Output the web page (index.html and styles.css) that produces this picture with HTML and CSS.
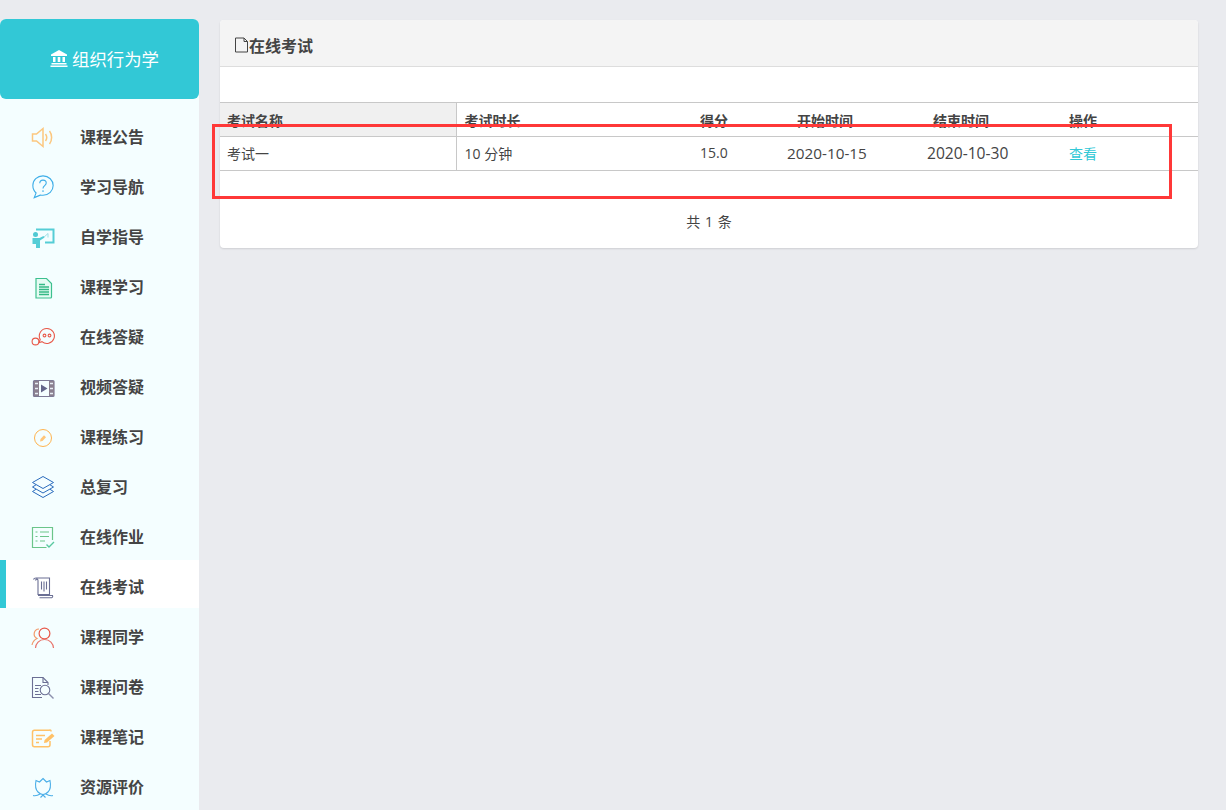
FILE: index.html
```html
<!DOCTYPE html>
<html lang="zh-CN">
<head>
<meta charset="utf-8">
<title>在线考试</title>
<link rel="stylesheet" href="styles.css">
</head>
<body>
<div class="app">
  <aside class="sidebar">
    <div class="course">
      <svg class="bank" viewBox="0 0 18 18"><path d="M9 1 1 5.500V7h16V5.500zM3 8h2.500v5H3zM7.700 8h2.600v5H7.700zM12.500 8H15v5h-2.500zM1.500 14h15v1.500h-15zM.5 16.500h17V18H.5z" fill="#fff"/></svg>
      <span>组织行为学</span>
    </div>
    <nav class="nav">
      <a class="item"><svg class="ico" viewBox="0 0 24 24" fill="none" stroke="#fcc77f" stroke-width="1.500"><path d="M1.500 9H5.500L12 3.500V21.500L5.500 16H1.500Z"/><path d="M14.500 9a6 6 0 0 1 0 7"/><path d="M18.500 6c2.800 3.500 2.800 9.500 0 13"/></svg><span>课程公告</span></a>
      <a class="item"><svg class="ico" viewBox="0 0 24 26" fill="none" stroke="#3eaee8" stroke-width="1.200"><path d="M12 1C5.700 1 1 5.500 1 11.500c0 3.500 1.300 6 3.500 8L2.500 24.500l6.500-2.700c1 .2 2 .2 3 .2 6.300 0 11-4.700 11-10.500S18.300 1 12 1z"/><path d="M8.500 9c0-2.200 1.600-3.500 3.500-3.500s3.500 1.300 3.500 3.200c0 3-3.500 2.800-3.500 6"/><path d="M12 16.500v1.800"/></svg><span>学习导航</span></a>
      <a class="item"><svg class="ico" viewBox="0 0 24 24"><path d="M5 3.500h18.500v15H14v-2h7.500V5.500H5z" fill="#55cdd6"/><path d="M12 13l5-4.500M17 8.500v4" stroke="#9fdfe4" fill="none"/><circle cx="4.500" cy="9.500" r="2.500" fill="#4fc9d3"/><path d="M1.500 13h7l4-2 1 1.500-4.500 3V23H5v-4H1.500z" fill="#55cdd6"/></svg><span>自学指导</span></a>
      <a class="item"><svg class="ico" viewBox="0 0 24 24"><path d="M5 3.500h10.500l5 5v13.500a1 1 0 0 1-1 1H5z" fill="#e5fbf3" stroke="#3cc08f" stroke-width="1.200"/><path d="M8 9.500h6M8 12h10M8 14.500h10M8 17h10M8 19.500h10" stroke="#33b985" stroke-width="1.500"/></svg><span>课程学习</span></a>
      <a class="item"><svg class="ico" viewBox="0 0 24 24" fill="none" stroke="#e8594a" stroke-width="1.100"><path d="M16 3.500a7.500 7.500 0 1 1-5 13.200l-3 1 1.200-3.200A7.500 7.500 0 0 1 16 3.500z"/><circle cx="4.500" cy="16.500" r="3.400"/><circle cx="13.500" cy="10.500" r="1.400"/><circle cx="18.500" cy="10.500" r="1.400"/></svg><span>在线答疑</span></a>
      <a class="item"><svg class="ico" viewBox="0 0 24 24"><rect x="2.500" y="5.500" width="20.500" height="16" rx="1" fill="none" stroke="#7d7a96" stroke-width="1.200"/><path d="M3 6h5v15H3zM18 6h5v15h-5z" fill="#8a7f8f"/><path d="M4 8.500h3M4 13.500h3M4 18.500h3M19 8.500h3M19 13.500h3M19 18.500h3" stroke="#e8eef5" stroke-width="1.300"/><path d="M10 9.500l6.500 4-6.500 4z" fill="#63668a"/></svg><span>视频答疑</span></a>
      <a class="item"><svg class="ico" viewBox="0 0 24 24"><circle cx="12" cy="13" r="8.500" fill="none" stroke="#ffb44f" stroke-width="1"/><path d="M9 16.500l.5-2.500 3.500-3.800 2 2-3.500 3.800z" fill="#ffc67a"/></svg><span>课程练习</span></a>
      <a class="item"><svg class="ico" viewBox="0 0 24 24" fill="none" stroke="#2a6bbd" stroke-width="1" stroke-linejoin="round"><path d="M12 1.500 22.500 7.500 12 13.500 1.500 7.500z"/><path d="M5 9.800 1.500 12 12 18l10.500-6L19 9.800"/><path d="M5 14.300 1.500 16.500 12 22.500l10.500-6L19 14.300"/></svg><span>总复习</span></a>
      <a class="item"><svg class="ico" viewBox="0 0 24 24" fill="none" stroke="#6bc58a" stroke-width="1.200"><path d="M21.500 15V2.500H1.500v20h14"/><path d="M4.500 7h2M9 7h9M4.500 11.500h2M9 11.500h9M4.500 16h2M9 16h5"/><path d="M15.500 19.500l2.500 2.500 5-5" stroke="#58c9a0" stroke-width="1.400"/></svg><span>在线作业</span></a>
      <a class="item active"><svg class="ico" viewBox="0 0 24 24" fill="none" stroke="#6b6f94" stroke-width="1.100"><path d="M2.500 4.500C3 3 4 3 5 3h13.500v16.500H7V5.500C7 3.800 5 3.500 4.500 5.500"/><path d="M7 20.500h14.500c.5 1 0 2-.8 2.200H8.500"/><path d="M10.500 6.500v8M13 6.500v10M15.500 6.500v8"/></svg><span>在线考试</span></a>
      <a class="item"><svg class="ico" viewBox="0 0 24 24" fill="none" stroke-width="1.200"><path d="M8 4a5 5 0 0 0-2 9.500C3.200 14.800 1.500 17.500 1 20" stroke="#f29b6c"/><circle cx="13.500" cy="8.500" r="5.400" stroke="#e8594a"/><path d="M4.500 23c.3-4.500 3.500-8.500 9-8.500s8.700 4 9 8.500" stroke="#e8736a"/></svg><span>课程同学</span></a>
      <a class="item"><svg class="ico" viewBox="0 0 24 24" fill="none" stroke="#6b6f94" stroke-width="1.100"><path d="M11 22.500H1.500V2.500h10.500l5 5v2.500"/><path d="M12 2.500v5h5"/><path d="M4 10.500h6M4 13.500h3.500M4 16.500h3.500M4 19.500h6"/><circle cx="14" cy="15" r="4.800"/><path d="M17.500 18.500l5 5" stroke-width="1.400" stroke="#8c90ad"/></svg><span>课程问卷</span></a>
      <a class="item"><svg class="ico" viewBox="0 0 24 24" fill="none" stroke="#ffc167" stroke-width="1.500"><path d="M20 6.500V6a1 1 0 0 0-1.500-.8H3.500A2 2 0 0 0 1.500 7.200v12.600a2 2 0 0 0 2 2h13.500a2 2 0 0 0 2-2V16"/><path d="M5 10.500h9M5 14h6M5 17.500h3"/><path d="M13 18l.6-3L21 8.500l2.500 2.500-7.500 6.500z" fill="#ffc167" stroke="none"/></svg><span>课程笔记</span></a>
      <a class="item"><svg class="ico" viewBox="0 0 24 24" fill="none" stroke="#4aaee8" stroke-width="1.100"><path d="M12 3.500 15.500 7l3.500-1.500c1 5 .5 9-2 11.500-1.500 1.500-3.200 2.500-5 2.500S8.500 18.500 7 17C4.500 14.500 4 10.500 5 5.500L8.500 7z"/><path d="M2 20.500c2.500.5 5.500-.5 7-1.500M22 20.500c-2.500.5-5.500-.5-7-1.500M9.500 22.500 12 20l2.500 2.500"/></svg><span>资源评价</span></a>
    </nav>
  </aside>
  <main class="main">
    <section class="card">
      <header class="card-head">
        <svg class="doc" viewBox="0 0 15 16" fill="none" stroke="#444" stroke-width="1"><path d="M1.500 1h8.500l3.500 3.500v10.500h-12z"/><path d="M10 1v3.500h3.500"/></svg><span>在线考试</span>
      </header>
      <div class="toolbar"></div>
      <table class="exam">
        <colgroup>
          <col class="c1"><col class="c2"><col class="c3"><col class="c4"><col class="c5"><col class="c6">
        </colgroup>
        <thead>
          <tr>
            <th class="shade divided">考试名称</th>
            <th class="second">考试时长</th>
            <th>得分</th>
            <th class="start-head">开始时间</th>
            <th class="end-head">结束时间</th>
            <th>操作</th>
          </tr>
        </thead>
        <tbody>
          <tr>
            <td class="divided"><span class="cell">考试一</span></td>
            <td class="second"><span class="cell">10 分钟</span></td>
            <td><span class="cell">15.0</span></td>
            <td class="date"><span class="cell">2020-10-15</span></td>
            <td class="date wide"><span class="cell">2020-10-30</span></td>
            <td><a class="view cell">查看</a></td>
          </tr>
        </tbody>
      </table>
      <div class="pager">共 1 条</div>
    </section>
  </main>
</div>
<div class="annotation"></div>
</body>
</html>
```
FILE: styles.css
```css
* { box-sizing: border-box; }
html, body { margin: 0; height: 100%; }
body {
  background: #eaebef;
  font-family: "Open Sans", "Noto Sans CJK SC", sans-serif;
  color: #444;
  overflow: hidden;
}
.app { display: flex; height: 810px; overflow: hidden; }
.sidebar {
  width: 199px;
  flex: none;
  margin-top: 19px;
  background: #f4feff;
  border-radius: 6px 6px 0 0;
}
.course {
  height: 80px;
  padding: 0 0 2px 50px;
  background: #32c8d6;
  border-radius: 6px;
  color: #fff;
  display: flex;
  align-items: center;
  gap: 4px;
  font-size: 17.4px;
}
.bank { width: 18px; height: 18px; }
.nav {
  display: flex;
  flex-direction: column;
  gap: 2px;
  padding-top: 11px;
}
.item {
  display: flex;
  align-items: center;
  flex: none;
  height: 48px;
  padding: 6px 0 0 31px;
  font-family: "Noto Sans CJK SC", sans-serif;
  font-size: 16px;
  font-weight: 700;
  color: #444;
}
.item span { margin: 0 0 2px 25px; }
.item.active {
  background: #fff;
  box-shadow: inset 6px 0 0 #32c8d6;
}
.ico { width: 24px; height: 24px; flex: none; }
.main { flex: 1; padding: 20px 28px 0 21px; }
.card {
  background: #fff;
  border-radius: 4px;
  box-shadow: 0 1px 2px rgba(0, 0, 0, .12);
  height: 228px;
  overflow: hidden;
}
.card-head {
  height: 47px;
  padding: 4px 0 0 14px;
  background: #f4f4f4;
  border-bottom: 1px solid #ddd;
  display: flex;
  align-items: center;
  font-family: "Noto Sans CJK SC", sans-serif;
  font-size: 16px;
  font-weight: 700;
}
.doc { width: 15px; height: 16px; }
.toolbar { height: 35px; }
.exam {
  width: 100%;
  table-layout: fixed;
  border-collapse: collapse;
  font-size: 14px;
}
.c1 { width: 236px; }
.c2 { width: 237px; }
.c3 { width: 87px; }
.c4 { width: 140px; }
.c5 { width: 142px; }
.exam th, .exam td {
  height: 34px;
  padding: 0 7px;
  text-align: left;
  border-top: 1px solid #c8c8c8;
  border-bottom: 1px solid #c8c8c8;
}
.exam th {
  font-family: "Noto Sans CJK SC", sans-serif;
  font-size: 14px;
  font-weight: 700;
}
.cell { display: block; margin-bottom: 2px; }
.shade { background: #f0f0f0; }
.exam .divided { border-right: 1px solid #c8c8c8; }
.exam .second { padding-left: 8px; }
.exam .start-head { padding-left: 17px; }
.exam .end-head { padding-left: 13px; }
.exam .date { font-size: 15.3px; }
.exam .wide { font-size: 15.6px; }
.view { color: #32c8d6; }
.pager {
  margin-top: 33px;
  text-align: center;
  font-size: 14px;
  word-spacing: 1px;
  line-height: 36px;
  height: 36px;
}
.annotation {
  position: absolute;
  left: 212px;
  top: 124px;
  width: 960px;
  height: 75px;
  border: 3px solid #ff3838;
}
```
